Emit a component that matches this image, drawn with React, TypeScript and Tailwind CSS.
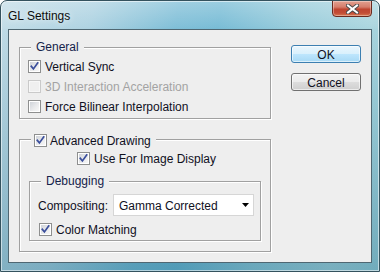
import React from "react";

function Check({ checked, disabled }: { checked?: boolean; disabled?: boolean }) {
  return (
    <span
      className={
        disabled
          ? "relative inline-block w-[13px] h-[13px] shrink-0 border border-[#cacaca] bg-[#f7f7f7]"
          : "relative inline-block w-[13px] h-[13px] shrink-0 border border-[#8e8f8f] bg-white"
      }
    >
      <span
        className={
          disabled
            ? "absolute inset-[1px] bg-[#efefef]"
            : "absolute inset-[1px] bg-[linear-gradient(135deg,#cfd3d9_0%,#e9eaec_55%,#f7f7f7_100%)]"
        }
      />
      {checked && (
        <svg className="absolute inset-0" width="11" height="11" viewBox="0 0 11 11">
          <path d="M2.3 5.3 L4.4 7.9 L8.7 2" fill="none" stroke="#3b4f9c" strokeWidth="1.7" strokeLinecap="square" strokeLinejoin="miter" />
        </svg>
      )}
    </span>
  );
}

function CheckRow({ label, checked, disabled }: { label: string; checked?: boolean; disabled?: boolean }) {
  return (
    <div className="h-[20px] flex items-center gap-[4px]">
      <Check checked={checked} disabled={disabled} />
      <span className={disabled ? "text-[#a3a3a3] leading-[14px] pt-[1px]" : "text-[#10101e] leading-[14px] pt-[1px]"}>{label}</span>
    </div>
  );
}

const groupBox =
  "relative border border-[#a0a0a0] shadow-[inset_1px_1px_0_#ffffff,1px_1px_0_#ffffff]";

export default function App() {
  return (
    <div className="w-[380px] h-[272px] [font-family:'Liberation_Sans',Arial,sans-serif] text-[12px]">
      <div className="w-[380px] h-[272px] flex flex-col rounded-t-[7px] border border-[#34525e] overflow-hidden bg-[linear-gradient(180deg,rgba(255,255,255,0.3)_0px,rgba(255,255,255,0.08)_26px,rgba(255,255,255,0)_30px,rgba(0,80,110,0.28)_100%),linear-gradient(100deg,#c0dbe6_0%,#a9d0e0_22%,#78bbd5_42%,#70b8d3_52%,#92c9d9_70%,#a6d3dd_88%,#9ccfda_100%)] shadow-[inset_0_0_0_1px_rgba(255,255,255,0.55)]">
        {/* Title bar */}
        <div className="h-[28px] shrink-0 flex justify-between items-start">
          <span className="pl-[7px] pt-[8px] leading-[14px] text-[12px] text-[#0d0d0d] [text-shadow:0_0_6px_rgba(255,255,255,0.9)]">
            GL Settings
          </span>
          <div className="mr-[7px] w-[40px] h-[17px] -mt-[1px] rounded-b-[4px] border border-[#6a2a1f] bg-[linear-gradient(180deg,#e2a090_0%,#d57e6c_40%,#bf4530_55%,#c24d36_80%,#d9774f_100%)] shadow-[inset_0_0_0_1px_rgba(255,255,255,0.35)] flex items-center justify-center">
            <svg width="13" height="10" viewBox="0 0 13 10">
              <path d="M2 1.5 L11 8.5 M11 1.5 L2 8.5" stroke="#4a4a4a" strokeWidth="4" strokeLinecap="square" />
              <path d="M2 1.5 L11 8.5 M11 1.5 L2 8.5" stroke="#ffffff" strokeWidth="2" strokeLinecap="square" />
            </svg>
          </div>
        </div>

        {/* Client area */}
        <div className="mx-[7px] mb-[8px] flex-1 border border-[#4f6772] bg-[#eeeeee] flex">
          {/* Left column */}
          <div className="ml-[10px] mt-[17px] w-[252px] flex flex-col">
            {/* General */}
            <div className={`${groupBox} h-[72px] pl-[8px] pt-[8px]`}>
              <span className="absolute left-[11px] top-[-8px] px-[5px] h-[14px] leading-[14px] bg-[#eeeeee] text-[#14224a]">
                General
              </span>
              <CheckRow label="Vertical Sync" checked />
              <CheckRow label="3D Interaction Acceleration" disabled />
              <CheckRow label="Force Bilinear Interpolation" />
            </div>

            {/* Advanced Drawing */}
            <div className={`${groupBox} mt-[20px] h-[113px] pl-[9px] pt-[8px] flex flex-col`}>
              <div className="absolute left-[11px] top-[-8px] px-[3px] pr-[5px] h-[16px] flex items-center gap-[3px] bg-[#eeeeee]">
                <Check checked />
                <span className="text-[#10101e] leading-[14px] pt-[1px]">Advanced Drawing</span>
              </div>
              <div className="ml-[48px]">
                <CheckRow label="Use For Image Display" checked />
              </div>

              {/* Debugging */}
              <div className={`${groupBox} mt-[13px] w-[232px] h-[60px] pt-[12px] flex flex-col`}>
                <span className="absolute left-[11px] top-[-8px] px-[5px] h-[14px] leading-[14px] bg-[#eeeeee] text-[#14224a]">
                  Debugging
                </span>
                <div className="h-[22px] pl-[8px] flex items-center">
                  <span className="w-[75px] text-[#10101e] leading-[14px] pt-[1px]">Compositing:</span>
                  <div className="w-[141px] h-[22px] border border-[#d6d6d6] bg-white flex items-center justify-between pl-[5px] pr-[4px]">
                    <span className="text-[#10101e] leading-[14px] pt-[1px]">Gamma Corrected</span>
                    <svg width="7" height="4" viewBox="0 0 7 4">
                      <polygon points="0,0 7,0 3.5,4" fill="#000000" />
                    </svg>
                  </div>
                </div>
                <div className="mt-[3px] pl-[9px]">
                  <CheckRow label="Color Matching" checked />
                </div>
              </div>
            </div>
          </div>

          {/* Right column */}
          <div className="ml-[20px] mt-[15px] flex flex-col gap-[10px]">
            <div className="w-[70px] h-[18px] rounded-[3px] border border-[#3c7fb1] bg-[linear-gradient(180deg,#eaf6fd_0%,#d9f0fc_50%,#bee6fd_50%,#a7d9f5_100%)] shadow-[inset_0_0_0_1px_rgba(255,255,255,0.6)] flex items-center justify-center text-[#10101e] leading-[14px] pt-[1px]">
              OK
            </div>
            <div className="w-[70px] h-[18px] rounded-[3px] border border-[#707070] bg-[linear-gradient(180deg,#f2f2f2_0%,#ebebeb_50%,#dddddd_50%,#cfcfcf_100%)] shadow-[inset_0_0_0_1px_rgba(255,255,255,0.6)] flex items-center justify-center text-[#10101e] leading-[14px] pt-[1px]">
              Cancel
            </div>
          </div>
        </div>
      </div>
    </div>
  );
}
